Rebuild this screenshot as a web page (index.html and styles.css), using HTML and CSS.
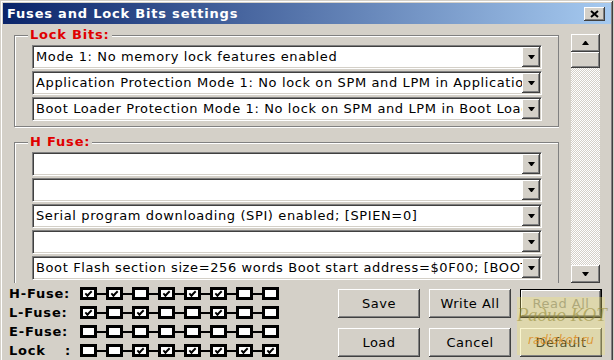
FILE: index.html
```html
<!DOCTYPE html>
<html lang="en">
<head>
    <meta charset="UTF-8">
    <title>Fuses and Lock Bits settings</title>
    <link rel="stylesheet" href="styles.css">
</head>
<body>
    <div class="window">
        <div class="titlebar">
            <span class="title">Fuses and Lock Bits settings</span>
            <span class="close raised">
                <svg width="9" height="8" viewBox="0 0 9 8"><path d="M1 1 L8 7 M8 1 L1 7" stroke="#000" stroke-width="2"/></svg>
            </span>
        </div>

        <div class="main">
            <div class="groups">
                <div class="group lock-group">
                    <div class="group-title">Lock Bits:</div>
                    <div class="combo"><span class="combo-text">Mode 1: No memory lock features enabled</span><span class="drop raised"></span></div>
                    <div class="combo"><span class="combo-text">Application Protection Mode 1: No lock on SPM and LPM in Application Section</span><span class="drop raised"></span></div>
                    <div class="combo"><span class="combo-text">Boot Loader Protection Mode 1: No lock on SPM and LPM in Boot Loader Section</span><span class="drop raised"></span></div>
                </div>

                <div class="group hfuse-group">
                    <div class="group-title">H Fuse:</div>
                    <div class="combo"><span class="combo-text"></span><span class="drop raised"></span></div>
                    <div class="combo"><span class="combo-text"></span><span class="drop raised"></span></div>
                    <div class="combo"><span class="combo-text">Serial program downloading (SPI) enabled; [SPIEN=0]</span><span class="drop raised"></span></div>
                    <div class="combo"><span class="combo-text"></span><span class="drop raised"></span></div>
                    <div class="combo"><span class="combo-text">Boot Flash section size=256 words Boot start address=$0F00; [BOOTSZ=10]</span><span class="drop raised"></span></div>
                </div>
            </div>

            <div class="scrollbar">
                <div class="sb-btn raised"><span class="arrow up"></span></div>
                <div class="sb-thumb raised"></div>
                <div class="sb-track"></div>
                <div class="sb-btn raised"><span class="arrow"></span></div>
            </div>
        </div>

        <div class="bottom">
            <div class="fuses">
                <div class="fuse-row">
                    <span class="fuse-label">H-Fuse:</span>
                    <div class="bits">
                        <i class="bit on"></i><i class="bit on"></i><i class="bit"></i><i class="bit on"></i>
                        <i class="bit on"></i><i class="bit on"></i><i class="bit"></i><i class="bit"></i>
                    </div>
                </div>
                <div class="fuse-row">
                    <span class="fuse-label">L-Fuse:</span>
                    <div class="bits">
                        <i class="bit on"></i><i class="bit"></i><i class="bit on"></i><i class="bit"></i>
                        <i class="bit"></i><i class="bit on"></i><i class="bit"></i><i class="bit"></i>
                    </div>
                </div>
                <div class="fuse-row">
                    <span class="fuse-label">E-Fuse:</span>
                    <div class="bits">
                        <i class="bit"></i><i class="bit"></i><i class="bit"></i><i class="bit"></i>
                        <i class="bit"></i><i class="bit"></i><i class="bit"></i><i class="bit"></i>
                    </div>
                </div>
                <div class="fuse-row">
                    <span class="fuse-label split"><span>Lock</span><span>:</span></span>
                    <div class="bits">
                        <i class="bit"></i><i class="bit"></i><i class="bit on"></i><i class="bit on"></i>
                        <i class="bit on"></i><i class="bit on"></i><i class="bit on"></i><i class="bit on"></i>
                    </div>
                </div>
            </div>

            <div class="buttons">
                <button class="btn raised">Save</button>
                <button class="btn raised">Write All</button>
                <button class="btn raised default disabled">Read All</button>
                <button class="btn raised">Load</button>
                <button class="btn raised">Cancel</button>
                <button class="btn raised">Default</button>
            </div>
        </div>

        <div class="watermark">
            <div class="wm-big">Радио КОТ</div>
            <div class="wm-small">radiokot.ru</div>
        </div>
    </div>
</body>
</html>
```

FILE: styles.css
```css
html, body {
    margin: 0;
    background-color: #d4d0c8;
}

body {
    font-family: "DejaVu Sans", Verdana, sans-serif;
    font-size: 13px;
    letter-spacing: 0.5px;
    color: #000;
}

.window {
    position: relative;
    width: 613px;
    height: 360px;
    box-sizing: border-box;
    padding: 3px 0 0 3px;
    overflow: hidden;
    box-shadow: inset 1px 1px 0 #d4d0c8, inset -1px 0 0 #404040,
                inset 2px 2px 0 #fff, inset -2px 0 0 #808080;
}

/* classic 3d button look */
.raised {
    background-color: #d4d0c8;
    box-shadow: inset -1px -1px 0 #404040, inset 1px 1px 0 #fff,
                inset -2px -2px 0 #808080, inset 2px 2px 0 #d4d0c8;
}

.titlebar {
    display: flex;
    align-items: center;
    height: 21px;
    margin-right: 2px;
    padding-left: 4px;
    background: linear-gradient(to right, #0a246a, #a6caf0);
}

.title {
    color: #fff;
    font-weight: bold;
    letter-spacing: 0.8px;
}

.close {
    margin-left: auto;
    margin-right: 6px;
    width: 21px;
    height: 14px;
    display: flex;
    align-items: center;
    justify-content: center;
}

.main {
    display: flex;
    height: 259px;
}

.groups {
    width: 556px;
    box-sizing: border-box;
    padding-left: 11px;
    overflow: hidden;
}

.group {
    width: 545px;
    box-sizing: border-box;
    border: 1px solid #808080;
    box-shadow: inset 1px 1px 0 #fff, 1px 1px 0 #fff;
    padding: 0 16px 5px 17px;
    display: flex;
    flex-direction: column;
    gap: 2px;
}

.lock-group {
    margin-top: 11px;
}

.hfuse-group {
    margin-top: 15px;
}

.group-title {
    width: max-content;
    height: 16px;
    line-height: 16px;
    margin: -9px 0 0 -4px;
    padding: 0 2px;
    background-color: #d4d0c8;
    color: #e00000;
    font-weight: bold;
    letter-spacing: 0.8px;
}

.combo {
    display: flex;
    height: 24px;
    box-sizing: border-box;
    padding: 1px;
    background-color: #fff;
    border: 1px solid;
    border-color: #808080 #fff #fff #808080;
    box-shadow: inset 1px 1px 0 #404040, inset -1px -1px 0 #d4d0c8;
}

.combo-text {
    flex: 1;
    padding-left: 2px;
    line-height: 20px;
    letter-spacing: 0.62px;
    white-space: nowrap;
    overflow: hidden;
}

.drop {
    width: 18px;
    display: flex;
    align-items: center;
    justify-content: center;
}

.drop::after,
.arrow {
    content: "";
    width: 1px;
    height: 0;
    border-top: 4px solid #000;
    border-left: 3px solid transparent;
    border-right: 3px solid transparent;
}

.arrow.up {
    border-top: 0;
    border-bottom: 4px solid #000;
}

.scrollbar {
    width: 29px;
    height: 249px;
    margin: 10px 0 0 12px;
    display: flex;
    flex-direction: column;
}

.sb-btn {
    height: 18px;
    display: flex;
    align-items: center;
    justify-content: center;
}

.sb-thumb {
    height: 16px;
}

.sb-track {
    flex: 1;
    background: repeating-conic-gradient(#fff 0 25%, #d4d0c8 0 50%) 0 0 / 2px 2px;
}

.bottom {
    display: flex;
    padding: 1px 11px 0 6px;
}

.fuse-row {
    display: flex;
    align-items: center;
    height: 19px;
}

.fuse-label {
    width: 62px;
    margin-right: 9px;
    font-weight: bold;
    letter-spacing: 0.8px;
}

.fuse-label.split {
    display: flex;
    justify-content: space-between;
}

.bits {
    display: flex;
    gap: 9px;
    background: linear-gradient(#000, #000) center / 100% 2px no-repeat;
}

.bit {
    width: 17px;
    height: 13px;
    box-sizing: border-box;
    border: 3px solid #000;
    background-color: #fff;
    display: flex;
    align-items: center;
    justify-content: center;
    overflow: hidden;
}

.bit.on::after {
    content: "";
    width: 5px;
    height: 2px;
    margin-top: -2px;
    border-left: 2px solid #000;
    border-bottom: 2px solid #000;
    transform: rotate(-45deg);
}

.buttons {
    margin-left: auto;
    margin-top: 5px;
    display: grid;
    grid-template-columns: repeat(3, 82px);
    grid-auto-rows: 29px;
    column-gap: 9px;
    row-gap: 10px;
}

.btn {
    border: none;
    padding: 0;
    font-family: inherit;
    font-size: 13px;
    letter-spacing: 0.5px;
    color: #000;
}

.btn.default {
    box-shadow: inset 0 0 0 1px #000, inset -2px -2px 0 #404040, inset 2px 2px 0 #fff,
                inset -3px -3px 0 #808080, inset 3px 3px 0 #d4d0c8;
}

.btn.disabled {
    color: #8a887e;
}

/* site watermark sitting over the corner */
.watermark {
    position: absolute;
    left: 517px;
    top: 297px;
    width: 88px;
    height: 58px;
    background-color: rgba(240, 228, 120, 0.35);
    text-align: center;
    font-style: italic;
    white-space: nowrap;
    letter-spacing: 0;
}

.wm-big {
    font-family: "Liberation Serif", serif;
    font-size: 19px;
    line-height: 36px;
    color: rgba(150, 140, 55, 0.6);
}

.wm-small {
    font-size: 12px;
    line-height: 14px;
    color: rgba(220, 140, 30, 0.85);
}
```
